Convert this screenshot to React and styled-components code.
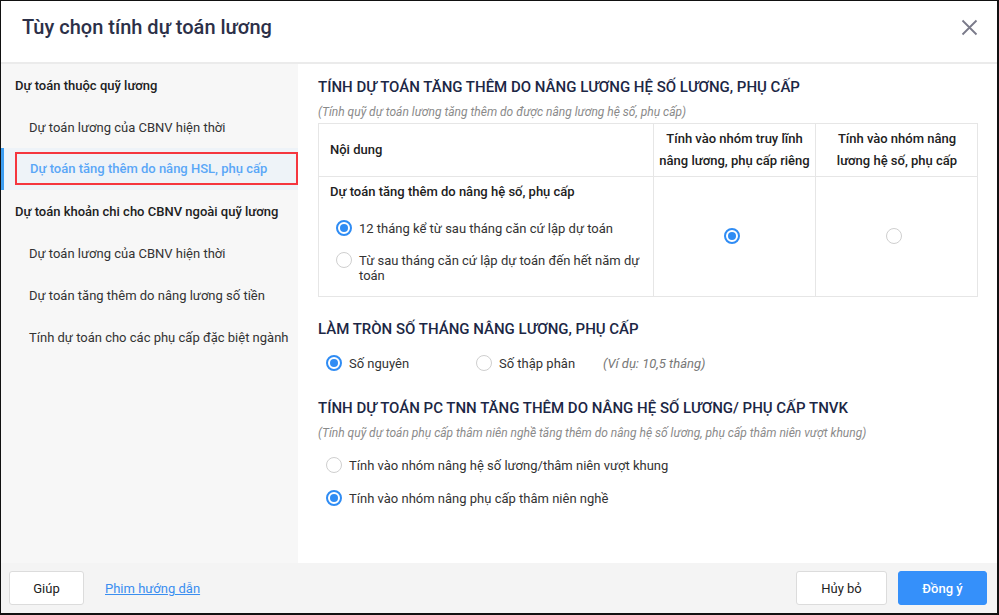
import React, { useState } from 'react';
import styled, { createGlobalStyle, css } from 'styled-components';

const GlobalStyle = createGlobalStyle`
  html, body {
    margin: 0;
    padding: 0;
    background: #ffffff;
  }
  body {
    font-family: Roboto, "Noto Sans", "Liberation Sans", sans-serif;
    font-size: 13px;
    color: #212121;
  }
  * {
    box-sizing: border-box;
  }
`;

const menu = [
  { type: 'group', label: 'Dự toán thuộc quỹ lương' },
  { type: 'item', label: 'Dự toán lương của CBNV hiện thời' },
  { type: 'item', label: 'Dự toán tăng thêm do nâng HSL, phụ cấp', active: true },
  { type: 'group', label: 'Dự toán khoản chi cho CBNV ngoài quỹ lương' },
  { type: 'item', label: 'Dự toán lương của CBNV hiện thời' },
  { type: 'item', label: 'Dự toán tăng thêm do nâng lương số tiền' },
  { type: 'item', label: 'Tính dự toán cho các phụ cấp đặc biệt ngành' },
];

const Radio = ({ checked, onClick }) => (
  <RadioCircle checked={checked} onClick={onClick}>
    {checked && <RadioDot />}
  </RadioCircle>
);

const App = () => {
  const [period, setPeriod] = useState('12');
  const [group, setGroup] = useState('truy');
  const [rounding, setRounding] = useState('int');
  const [tnn, setTnn] = useState('pc');

  return (
    <>
      <GlobalStyle />
      <Dialog>
        <Header>
          <Title>Tùy chọn tính dự toán lương</Title>
          <CloseButton>
            <svg width="17" height="17" viewBox="0 0 17 17">
              <path d="M1.5 1.5 L15.5 15.5 M15.5 1.5 L1.5 15.5" stroke="#7a7a8a" strokeWidth="1.8" fill="none" />
            </svg>
          </CloseButton>
        </Header>

        <Body>
          <Sidebar>
            {menu.map((m, i) =>
              m.type === 'group' ? (
                <GroupTitle key={i}>{m.label}</GroupTitle>
              ) : (
                <MenuItem key={i} active={m.active}>
                  {m.active ? <Highlight>{m.label}</Highlight> : m.label}
                </MenuItem>
              )
            )}
          </Sidebar>

          <Main>
            <SectionTitle>Tính dự toán tăng thêm do nâng lương hệ số lương, phụ cấp</SectionTitle>
            <Note>(Tính quỹ dự toán lương tăng thêm do được nâng lương hệ số, phụ cấp)</Note>

            <Table>
              <HeadCell align="left">Nội dung</HeadCell>
              <HeadCell>Tính vào nhóm truy lĩnh<br />nâng lương, phụ cấp riêng</HeadCell>
              <HeadCell last>Tính vào nhóm nâng<br />lương hệ số, phụ cấp</HeadCell>

              <ContentCell>
                <CellTitle>Dự toán tăng thêm do nâng hệ số, phụ cấp</CellTitle>
                <OptionList>
                  <Option>
                    <Radio checked={period === '12'} onClick={() => setPeriod('12')} />
                    <span>12 tháng kể từ sau tháng căn cứ lập dự toán</span>
                  </Option>
                  <Option narrow>
                    <Radio checked={period === 'end'} onClick={() => setPeriod('end')} />
                    <span>Từ sau tháng căn cứ lập dự toán đến hết năm dự toán</span>
                  </Option>
                </OptionList>
              </ContentCell>
              <RadioCell>
                <Radio checked={group === 'truy'} onClick={() => setGroup('truy')} />
              </RadioCell>
              <RadioCell last>
                <Radio checked={group === 'hsl'} onClick={() => setGroup('hsl')} />
              </RadioCell>
            </Table>

            <SectionTitle spaced="23px">Làm tròn số tháng nâng lương, phụ cấp</SectionTitle>
            <InlineOptions>
              <Option inline width="150px">
                <Radio checked={rounding === 'int'} onClick={() => setRounding('int')} />
                <span>Số nguyên</span>
              </Option>
              <Option inline width="127px">
                <Radio checked={rounding === 'dec'} onClick={() => setRounding('dec')} />
                <span>Số thập phân</span>
              </Option>
              <Example>(Ví dụ: 10,5 tháng)</Example>
            </InlineOptions>

            <SectionTitle spaced="28px">Tính dự toán PC TNN tăng thêm do nâng hệ số lương/ phụ cấp TNVK</SectionTitle>
            <Note>(Tính quỹ dự toán phụ cấp thâm niên nghề tăng thêm do nâng hệ số lương, phụ cấp thâm niên vượt khung)</Note>
            <StackOptions>
              <Option>
                <Radio checked={tnn === 'hsl'} onClick={() => setTnn('hsl')} />
                <span>Tính vào nhóm nâng hệ số lương/thâm niên vượt khung</span>
              </Option>
              <Option>
                <Radio checked={tnn === 'pc'} onClick={() => setTnn('pc')} />
                <span>Tính vào nhóm nâng phụ cấp thâm niên nghề</span>
              </Option>
            </StackOptions>
          </Main>
        </Body>

        <Footer>
          <FooterGroup>
            <Button width="75px">Giúp</Button>
            <HelpLink href="#">Phim hướng dẫn</HelpLink>
          </FooterGroup>
          <FooterGroup gap="11px">
            <Button width="91px">Hủy bỏ</Button>
            <Button width="89px" primary>Đồng ý</Button>
          </FooterGroup>
        </Footer>
      </Dialog>
    </>
  );
};

const Dialog = styled.div`
  width: 999px;
  height: 615px;
  border: 1px solid #111;
  border-right-width: 2px;
  border-bottom-width: 2px;
  display: flex;
  flex-direction: column;
  background: #ffffff;
  overflow: hidden;
`;

const Header = styled.div`
  height: 63px;
  flex-shrink: 0;
  border-bottom: 2px solid #ebebeb;
  display: flex;
  align-items: center;
  justify-content: space-between;
  padding: 0 19px 0 21px;
`;

const Title = styled.div`
  font-size: 20px;
  font-weight: 500;
  color: #2c3048;
  margin-top: -9px;
`;

const CloseButton = styled.div`
  width: 17px;
  height: 17px;
  display: flex;
  margin-top: -8px;
  cursor: pointer;
`;

const Body = styled.div`
  flex: 1;
  display: flex;
  min-height: 0;
`;

const Sidebar = styled.div`
  width: 297px;
  flex-shrink: 0;
  background: #f7f7f7;
  display: flex;
  flex-direction: column;
`;

const GroupTitle = styled.div`
  height: 42px;
  display: flex;
  align-items: center;
  padding-left: 14px;
  font-weight: 500;
  color: #212121;
`;

const MenuItem = styled.div`
  height: 42px;
  display: flex;
  align-items: center;
  padding-left: 28px;
  color: #333;
  cursor: pointer;
  ${(p) =>
    p.active &&
    css`
      background: #eef3f8;
      border-left: 3px solid #3d9df0;
      padding-left: 11px;
      padding-top: 1px;
      color: #5aa7f7;
      font-weight: 500;
    `}
`;

const Highlight = styled.div`
  width: 283px;
  height: 33px;
  border: 2px solid #f5363f;
  display: flex;
  align-items: center;
  padding-left: 13px;
  margin-top: -2px;
`;

const Main = styled.div`
  flex: 1;
  padding: 14px 20px 0 20px;
`;

const SectionTitle = styled.div`
  font-size: 15px;
  font-weight: 500;
  line-height: 18px;
  text-transform: uppercase;
  color: #1c2745;
  margin-top: ${(p) => p.spaced || '0'};
`;

const Note = styled.div`
  font-size: 12px;
  line-height: 15px;
  font-style: italic;
  color: #8a8a8a;
  margin-top: 9px;
`;

const Table = styled.div`
  margin-top: 3px;
  display: grid;
  grid-template-columns: 335px 162px 162px;
  grid-template-rows: 53px 119px;
  border: 1px solid #e6e6e6;
  width: 660px;
`;

const HeadCell = styled.div`
  display: flex;
  align-items: center;
  justify-content: ${(p) => (p.align === 'left' ? 'flex-start' : 'center')};
  text-align: ${(p) => (p.align === 'left' ? 'left' : 'center')};
  padding: 0 ${(p) => (p.align === 'left' ? '11px' : '2px')};
  font-weight: 500;
  line-height: 22px;
  white-space: nowrap;
  border-right: ${(p) => (p.last ? 'none' : '1px solid #e6e6e6')};
  border-bottom: 1px solid #e6e6e6;
  color: #212121;
`;

const ContentCell = styled.div`
  padding: 7px 12px 0 11px;
  border-right: 1px solid #e6e6e6;
`;

const CellTitle = styled.div`
  font-weight: 500;
  line-height: 16px;
`;

const OptionList = styled.div`
  margin-top: 21px;
  padding-left: 6px;
  display: flex;
  flex-direction: column;
  gap: 17px;
`;

const Option = styled.label`
  display: flex;
  align-items: flex-start;
  gap: 7px;
  line-height: 15px;
  color: #333;
  cursor: pointer;
  ${(p) =>
    p.inline &&
    css`
      width: ${p.width};
      flex-shrink: 0;
    `}
  ${(p) =>
    p.narrow &&
    css`
      span {
        max-width: 283px;
      }
    `}
`;

const RadioCell = styled.div`
  display: flex;
  align-items: center;
  justify-content: center;
  border-right: ${(p) => (p.last ? 'none' : '1px solid #e6e6e6')};
  padding-right: 6px;
`;

const RadioCircle = styled.span`
  width: 16px;
  height: 16px;
  flex-shrink: 0;
  border-radius: 50%;
  background: #fff;
  display: flex;
  align-items: center;
  justify-content: center;
  border: ${(p) => (p.checked ? '2px solid #2f8cf4' : '1px solid #cfcfcf')};
  margin-top: -1px;
  cursor: pointer;
`;

const RadioDot = styled.span`
  width: 8px;
  height: 8px;
  border-radius: 50%;
  background: #2f8cf4;
`;

const InlineOptions = styled.div`
  display: flex;
  align-items: center;
  margin-top: 18px;
  padding-left: 8px;
`;

const Example = styled.span`
  font-style: italic;
  color: #777;
`;

const StackOptions = styled.div`
  display: flex;
  flex-direction: column;
  gap: 18px;
  margin-top: 17px;
  padding-left: 8px;
`;

const Footer = styled.div`
  height: 50px;
  flex-shrink: 0;
  background: #f4f4f4;
  display: flex;
  align-items: center;
  justify-content: space-between;
  padding: 0 10px 0 8px;
`;

const FooterGroup = styled.div`
  display: flex;
  align-items: center;
  gap: ${(p) => p.gap || '21px'};
`;

const Button = styled.button`
  width: ${(p) => p.width};
  height: 34px;
  border-radius: 3px;
  font-family: inherit;
  font-size: 13px;
  cursor: pointer;
  border: 1px solid ${(p) => (p.primary ? '#3590fa' : '#dcdcdc')};
  background: ${(p) => (p.primary ? '#3590fa' : '#ffffff')};
  color: ${(p) => (p.primary ? '#ffffff' : '#212121')};
  font-weight: ${(p) => (p.primary ? 500 : 400)};
`;

const HelpLink = styled.a`
  color: #3a8ef0;
  text-decoration: underline;
  font-size: 13px;
`;

export default App;
